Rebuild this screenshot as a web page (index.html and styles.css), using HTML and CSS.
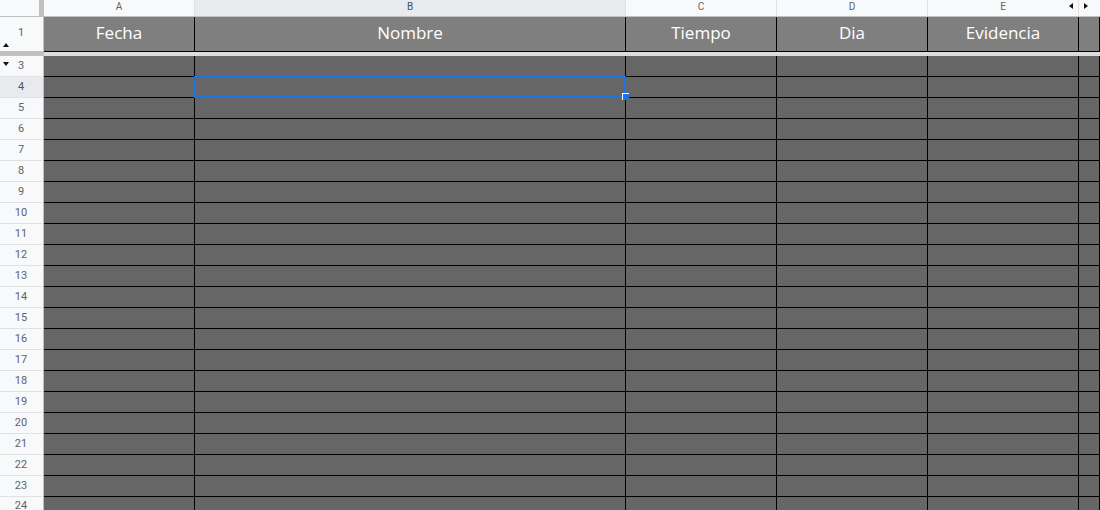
FILE: index.html
```html
<!DOCTYPE html>
<html lang="es">
<head>
<meta charset="utf-8">
<title>Hoja</title>
<link rel="stylesheet" href="styles.css">
</head>
<body>
<div class="sheet">
  <div class="grid">
    <!-- column headers -->
    <div class="corner"></div>
    <div class="ch">A</div>
    <div class="ch ch-sel">B</div>
    <div class="ch">C</div>
    <div class="ch">D</div>
    <div class="ch ch-e">E<span class="scroll-left"></span></div>
    <div class="ch ch-last"><span class="scroll-right"></span></div>

    <!-- row 1 -->
    <div class="rh rh-1">1<span class="tri-up"></span></div>
    <div class="hc">Fecha</div>
    <div class="hc">Nombre</div>
    <div class="hc">Tiempo</div>
    <div class="hc">Dia</div>
    <div class="hc">Evidencia</div>
    <div class="hc"></div>

    <!-- freeze band -->
    <div class="band-h"></div>
    <div class="band"></div>
    <div class="band"></div>
    <div class="band"></div>
    <div class="band"></div>
    <div class="band"></div>
    <div class="band"></div>

    <div class="rh">3<span class="tri-down"></span></div><div class="c"></div><div class="c"></div><div class="c"></div><div class="c"></div><div class="c"></div><div class="c"></div>
    <div class="rh rh-sel">4</div><div class="c"></div><div class="c"></div><div class="c"></div><div class="c"></div><div class="c"></div><div class="c"></div>
    <div class="rh">5</div><div class="c"></div><div class="c"></div><div class="c"></div><div class="c"></div><div class="c"></div><div class="c"></div>
    <div class="rh">6</div><div class="c"></div><div class="c"></div><div class="c"></div><div class="c"></div><div class="c"></div><div class="c"></div>
    <div class="rh">7</div><div class="c"></div><div class="c"></div><div class="c"></div><div class="c"></div><div class="c"></div><div class="c"></div>
    <div class="rh">8</div><div class="c"></div><div class="c"></div><div class="c"></div><div class="c"></div><div class="c"></div><div class="c"></div>
    <div class="rh">9</div><div class="c"></div><div class="c"></div><div class="c"></div><div class="c"></div><div class="c"></div><div class="c"></div>
    <div class="rh">10</div><div class="c"></div><div class="c"></div><div class="c"></div><div class="c"></div><div class="c"></div><div class="c"></div>
    <div class="rh">11</div><div class="c"></div><div class="c"></div><div class="c"></div><div class="c"></div><div class="c"></div><div class="c"></div>
    <div class="rh">12</div><div class="c"></div><div class="c"></div><div class="c"></div><div class="c"></div><div class="c"></div><div class="c"></div>
    <div class="rh">13</div><div class="c"></div><div class="c"></div><div class="c"></div><div class="c"></div><div class="c"></div><div class="c"></div>
    <div class="rh">14</div><div class="c"></div><div class="c"></div><div class="c"></div><div class="c"></div><div class="c"></div><div class="c"></div>
    <div class="rh">15</div><div class="c"></div><div class="c"></div><div class="c"></div><div class="c"></div><div class="c"></div><div class="c"></div>
    <div class="rh">16</div><div class="c"></div><div class="c"></div><div class="c"></div><div class="c"></div><div class="c"></div><div class="c"></div>
    <div class="rh">17</div><div class="c"></div><div class="c"></div><div class="c"></div><div class="c"></div><div class="c"></div><div class="c"></div>
    <div class="rh">18</div><div class="c"></div><div class="c"></div><div class="c"></div><div class="c"></div><div class="c"></div><div class="c"></div>
    <div class="rh">19</div><div class="c"></div><div class="c"></div><div class="c"></div><div class="c"></div><div class="c"></div><div class="c"></div>
    <div class="rh">20</div><div class="c"></div><div class="c"></div><div class="c"></div><div class="c"></div><div class="c"></div><div class="c"></div>
    <div class="rh">21</div><div class="c"></div><div class="c"></div><div class="c"></div><div class="c"></div><div class="c"></div><div class="c"></div>
    <div class="rh">22</div><div class="c"></div><div class="c"></div><div class="c"></div><div class="c"></div><div class="c"></div><div class="c"></div>
    <div class="rh">23</div><div class="c"></div><div class="c"></div><div class="c"></div><div class="c"></div><div class="c"></div><div class="c"></div>
    <div class="rh rh-last">24</div><div class="c"></div><div class="c"></div><div class="c"></div><div class="c"></div><div class="c"></div><div class="c"></div>
  </div>
  <div class="selection"><span class="handle"></span></div>
</div>
</body>
</html>
```

FILE: styles.css
```css
html, body {
  margin: 0;
  padding: 0;
  background: #ffffff;
  overflow: hidden;
}

.sheet {
  position: relative;
  width: 1100px;
  height: 510px;
  overflow: hidden;
  font-family: Roboto, "Liberation Sans", Arial, sans-serif;
}

.grid {
  display: grid;
  grid-template-columns: 44px 151px 431px 151px 151px 151px 1fr;
  grid-template-rows: 17px 35px 4px repeat(21, 21px) 14px;
}

.grid > div {
  box-sizing: border-box;
}

/* column header row */
.corner {
  background: #f8f9fa;
  border-right: 5px solid #c0c0c0;
  border-bottom: 1px solid #c0c0c0;
}

.ch {
  position: relative;
  background: #f8f9fa;
  border-right: 1px solid #e1e1e1;
  border-bottom: 1px solid #c0c0c0;
  color: #5f6368;
  font-size: 10px;
  line-height: 13px;
  text-align: center;
}

.ch-sel {
  background: #e8eaed;
  color: #41506e;
}

.ch-last {
  border-right: none;
}

.scroll-left {
  position: absolute;
  right: 5px;
  top: 3px;
  width: 0;
  height: 0;
  border-top: 3px solid transparent;
  border-bottom: 3px solid transparent;
  border-right: 4px solid #111;
}

.scroll-right {
  position: absolute;
  left: 5px;
  top: 3px;
  width: 0;
  height: 0;
  border-top: 3px solid transparent;
  border-bottom: 3px solid transparent;
  border-left: 4px solid #111;
}

/* row headers */
.rh {
  position: relative;
  background: #f8f9fa;
  border-right: 1px solid #c0c0c0;
  border-bottom: 1px solid #e1e1e1;
  color: #5f6368;
  font-size: 11px;
  line-height: 20px;
  text-align: center;
  padding-right: 1px;
}

.rh-last {
  line-height: 18px;
}

.rh-sel {
  background: #e8eaed;
  color: #4a5573;
}

.rh-1 {
  line-height: 32px;
  border-bottom: 1px solid #c0c0c0;
}

.tri-up {
  position: absolute;
  left: 3px;
  top: 26px;
  width: 0;
  height: 0;
  border-left: 3px solid transparent;
  border-right: 3px solid transparent;
  border-bottom: 4px solid #111;
}

.tri-down {
  position: absolute;
  left: 3px;
  top: 6px;
  width: 0;
  height: 0;
  border-left: 3px solid transparent;
  border-right: 3px solid transparent;
  border-top: 4px solid #111;
}

.band-h {
  background: #c0c0c0;
  border-right: 1px solid #c0c0c0;
}

.band {
  background: #dadce0;
}

/* header cells (row 1) */
.hc {
  background: #7f7f7f;
  border-right: 1px solid #000;
  border-bottom: 1px solid #000;
  color: #ffffff;
  font-family: "Open Sans", "Noto Sans", sans-serif;
  font-size: 17px;
  line-height: 32px;
  text-align: center;
}

/* data cells */
.c {
  background: #666666;
  border-right: 1px solid #000;
  border-bottom: 1px solid #000;
}

/* selection overlay */
.selection {
  position: absolute;
  left: 194px;
  top: 76px;
  width: 432px;
  height: 22px;
  box-sizing: border-box;
  border: 2px solid #1a73e8;
}

.handle {
  position: absolute;
  right: -5px;
  bottom: -4px;
  width: 6px;
  height: 6px;
  background: #1a73e8;
  border-left: 1px solid #ffffff;
  border-top: 1px solid #ffffff;
}
```
